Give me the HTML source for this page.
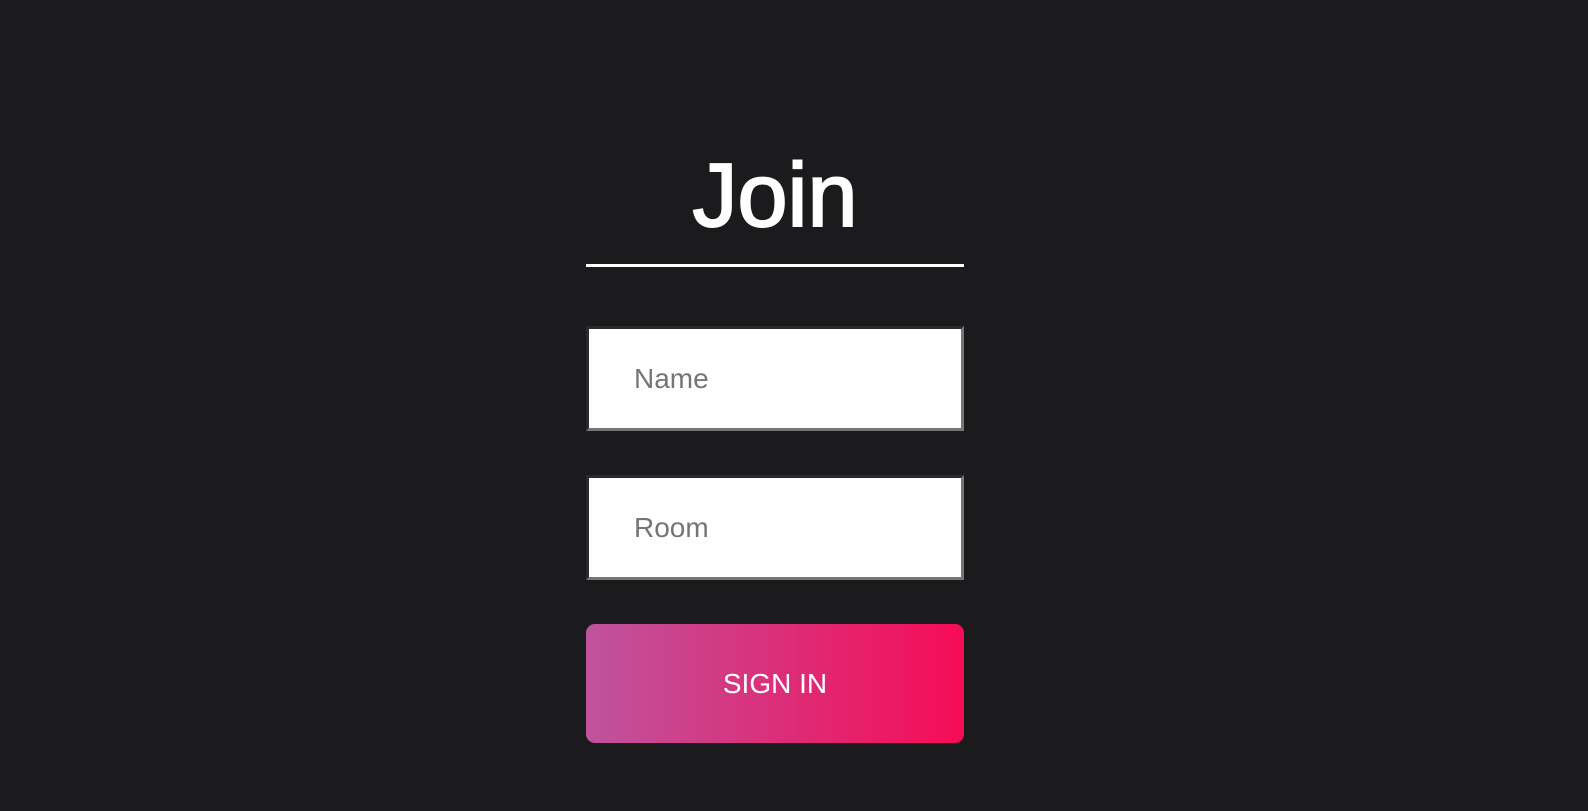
<!DOCTYPE html>
<html><head><style>
html,body{margin:0;padding:0;background:#1b1b1d;width:1588px;height:811px;overflow:hidden;font-family:"Liberation Sans",Arial,sans-serif;}
.t{position:absolute;left:586px;width:378px;top:141px;text-align:center;color:#fff;font-size:90px;line-height:110px;-webkit-text-stroke:2px #fff;}
.line{position:absolute;left:586px;width:378px;top:264px;height:3px;background:#fff;}
.in{position:absolute;left:586px;width:372px;height:99px;background:#fff;border-style:solid;border-width:3px;border-color:#2a2a2c #767676 #767676 #2a2a2c;}
.in span{position:absolute;left:45px;top:0;line-height:99px;font-size:28px;color:#757575;}
.btn{position:absolute;left:586px;top:624px;width:378px;height:119px;border-radius:9px;background:linear-gradient(90deg,#bf539d,#f70b56);color:#fff;font-size:28px;text-align:center;line-height:119px;}
</style></head><body>
<div class="t">Join</div>
<div class="line"></div>
<div class="in" style="top:326px"><span>Name</span></div>
<div class="in" style="top:475px"><span>Room</span></div>
<div class="btn">SIGN IN</div>
</body></html>
